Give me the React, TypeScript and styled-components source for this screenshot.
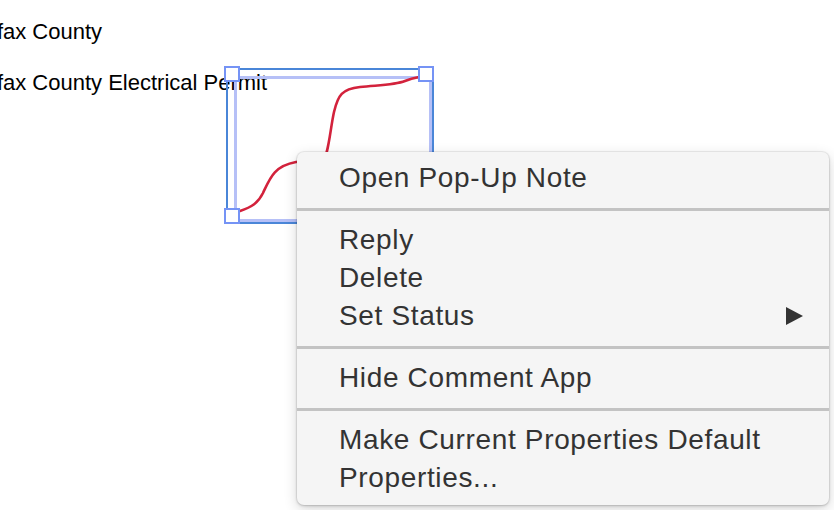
import React from "react";
import styled, { createGlobalStyle } from "styled-components";

const Global = createGlobalStyle`
  html, body {
    margin: 0;
    padding: 0;
    background: #ffffff;
  }
  body {
    width: 834px;
    height: 510px;
    overflow: hidden;
  }
`;

const Page = styled.div`
  position: relative;
  width: 834px;
  height: 510px;
  overflow: hidden;
  background: #fff;
`;

const Doc = styled.div`
  display: flex;
  flex-direction: column;
  gap: 26px;
  padding-top: 19px;
  margin-left: -41px;
  font-family: "Liberation Sans", Arial, sans-serif;
  font-size: 22px;
  line-height: 25px;
  color: #000;
  white-space: nowrap;
`;

const DocLine = styled.div``;

const Annotation = styled.div`
  position: absolute;
  left: 226px;
  top: 68px;
  width: 208px;
  height: 156px;
  box-sizing: border-box;
  border: 2px solid #4a86d8;
`;

const InnerFrame = styled.div`
  position: absolute;
  left: 6px;
  top: 6px;
  right: 0px;
  bottom: 0px;
  border: 3px solid #b6c0f7;
`;

const Ink = styled.svg`
  position: absolute;
  left: -228px;
  top: -70px;
  width: 834px;
  height: 510px;
  overflow: visible;
  pointer-events: none;
`;

const Handle = styled.div<{ $x: "left" | "right"; $y: "top" | "bottom" }>`
  position: absolute;
  width: 16px;
  height: 16px;
  box-sizing: border-box;
  background: #fff;
  border: 2px solid #7593f5;
  ${(p) => (p.$x === "left" ? "left: -4px;" : "right: -2px;")}
  ${(p) => (p.$y === "top" ? "top: -4px;" : "bottom: -2px;")}
`;

const Menu = styled.div`
  position: absolute;
  left: 297px;
  top: 152px;
  width: 532px;
  box-sizing: border-box;
  padding: 7px 0 8px;
  background: #f5f5f5;
  border-radius: 7px;
  box-shadow: 0 0 0 1px rgba(0, 0, 0, 0.05), 0 1px 3px rgba(0, 0, 0, 0.18),
    0 4px 14px rgba(0, 0, 0, 0.16);
  font-family: "Liberation Sans", Arial, sans-serif;
  font-size: 28px;
  line-height: 38px;
  letter-spacing: 0.65px;
  color: #333;
`;

const Item = styled.div`
  display: flex;
  align-items: center;
  justify-content: space-between;
  height: 38px;
  padding: 0 26px 0 42px;
  white-space: nowrap;
`;

const Separator = styled.div`
  height: 3px;
  margin: 11px 0 10px;
  background: #c3c3c3;
`;

const Arrow = styled.span`
  display: block;
  width: 0;
  height: 0;
  border-left: 17px solid #333;
  border-top: 9.5px solid transparent;
  border-bottom: 9.5px solid transparent;
`;

export default function App() {
  return (
    <Page>
      <Global />
      <Doc>
        <DocLine>Fairfax County</DocLine>
        <DocLine>Fairfax County Electrical Permit</DocLine>
      </Doc>
      <Annotation>
        <InnerFrame />
        <Ink viewBox="0 0 834 510">
          <path
            d="M240 211 C252 207 258 203 263 193 C270 178 274 166 296 162 L322 160 C328 160 330 130 334 112 C338 95 342 89 360 87 C380 85 395 85 405 81 C410 79 414 78 419 77"
            fill="none"
            stroke="#d3223c"
            strokeWidth="2.6"
            strokeLinecap="round"
          />
        </Ink>
        <Handle $x="left" $y="top" />
        <Handle $x="right" $y="top" />
        <Handle $x="left" $y="bottom" />
        <Handle $x="right" $y="bottom" />
      </Annotation>
      <Menu>
        <Item>Open Pop-Up Note</Item>
        <Separator />
        <Item>Reply</Item>
        <Item>Delete</Item>
        <Item>
          Set Status
          <Arrow />
        </Item>
        <Separator />
        <Item>Hide Comment App</Item>
        <Separator />
        <Item>Make Current Properties Default</Item>
        <Item>Properties...</Item>
      </Menu>
    </Page>
  );
}
